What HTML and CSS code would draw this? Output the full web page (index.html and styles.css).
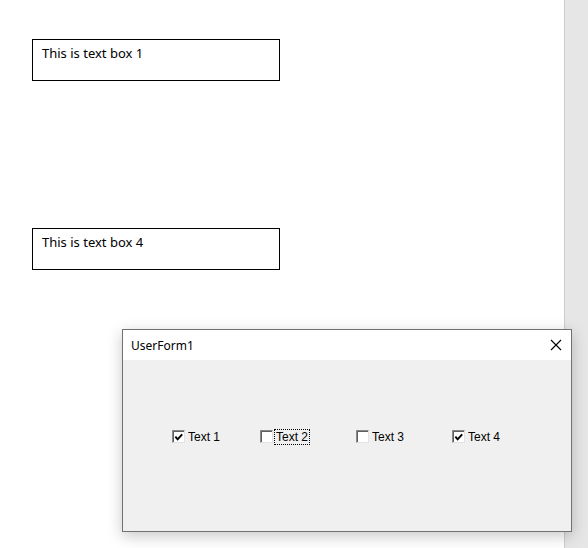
FILE: index.html
```html
<!DOCTYPE html>
<html lang="en">
  <head>
    <meta charset="UTF-8" />
    <title>UserForm1</title>
    <link rel="stylesheet" href="styles.css">
  </head>
  <body>
    <div class="sheet">
      <div class="textbox">This is text box 1</div>
      <div class="textbox second">This is text box 4</div>
    </div>
    <div class="scroll"></div>

    <!-- the form window floats above the sheet -->
    <div class="form">
      <div class="form-title">
        <span>UserForm1</span>
        <svg class="close" width="12" height="12" viewBox="0 0 12 12">
          <path d="M1 1 L11 11 M11 1 L1 11" stroke="#000" stroke-width="1.1" fill="none" />
        </svg>
      </div>
      <div class="form-body">
        <div class="checks">
          <div class="check w1">
            <span class="box"><svg width="11" height="11" viewBox="0 0 11 11"><path d="M1.5 4.5 L4 7.5 L9 2" stroke="#000" stroke-width="2.2" fill="none" /></svg></span>
            <span class="lbl">Text 1</span>
          </div>
          <div class="check w2">
            <span class="box"></span>
            <span class="lbl focus">Text 2</span>
          </div>
          <div class="check w2">
            <span class="box"></span>
            <span class="lbl">Text 3</span>
          </div>
          <div class="check">
            <span class="box"><svg width="11" height="11" viewBox="0 0 11 11"><path d="M1.5 4.5 L4 7.5 L9 2" stroke="#000" stroke-width="2.2" fill="none" /></svg></span>
            <span class="lbl">Text 4</span>
          </div>
        </div>
      </div>
    </div>
  </body>
</html>
```

FILE: styles.css
```css
body {
  margin: 0;
  display: flex;
  height: 548px;
  background: #fff;
  font-family: "Noto Sans", "Open Sans", sans-serif;
}

.sheet {
  width: 564px;
  padding: 39px 0 0 32px;
  box-sizing: border-box;
}

.textbox {
  width: 248px;
  height: 42px;
  box-sizing: border-box;
  border: 1px solid #000;
  padding: 4px 0 0 9px;
  font-size: 13px;
  color: #000;
}

.second {
  margin-top: 147px;
}

.scroll {
  flex: 1;
  border-left: 1px solid #cdcdcd;
  background: #e6e6e6;
}

.form {
  position: absolute;
  left: 122px;
  top: 329px;
  width: 450px;
  height: 203px;
  box-sizing: border-box;
  border: 1px solid #717171;
  background: #f0f0f0;
  box-shadow: 0 4px 14px rgba(0, 0, 0, 0.22);
  display: flex;
  flex-direction: column;
}

.form-title {
  height: 30px;
  background: #fff;
  display: flex;
  align-items: center;
  justify-content: space-between;
  padding: 0 9px 0 8px;
  font-size: 12px;
  color: #000;
}

.close {
  display: block;
  margin-top: -1px;
}

.form-body {
  flex: 1;
}

.checks {
  display: flex;
  padding: 69px 0 0 49px;
  font-family: "Liberation Sans", Arial, sans-serif;
  font-size: 12px;
  color: #000;
}

.check {
  display: flex;
  align-items: center;
  gap: 1px;
  height: 15px;
}

.w1 {
  width: 88px;
}

.w2 {
  width: 96px;
}

.box {
  width: 13px;
  height: 13px;
  box-sizing: border-box;
  border: 1px solid;
  border-color: #8a8a8a #e2e2e2 #e2e2e2 #8a8a8a;
  box-shadow: inset 1px 1px 0 #5e5e5e;
  background: #fff;
  display: flex;
  align-items: center;
  justify-content: center;
}

.box svg {
  display: block;
  margin: 1px 0 0 1px;
}

.lbl {
  padding: 0 1px;
  border: 1px dotted transparent;
  line-height: 14px;
}

.focus {
  border-color: #000;
}
```
